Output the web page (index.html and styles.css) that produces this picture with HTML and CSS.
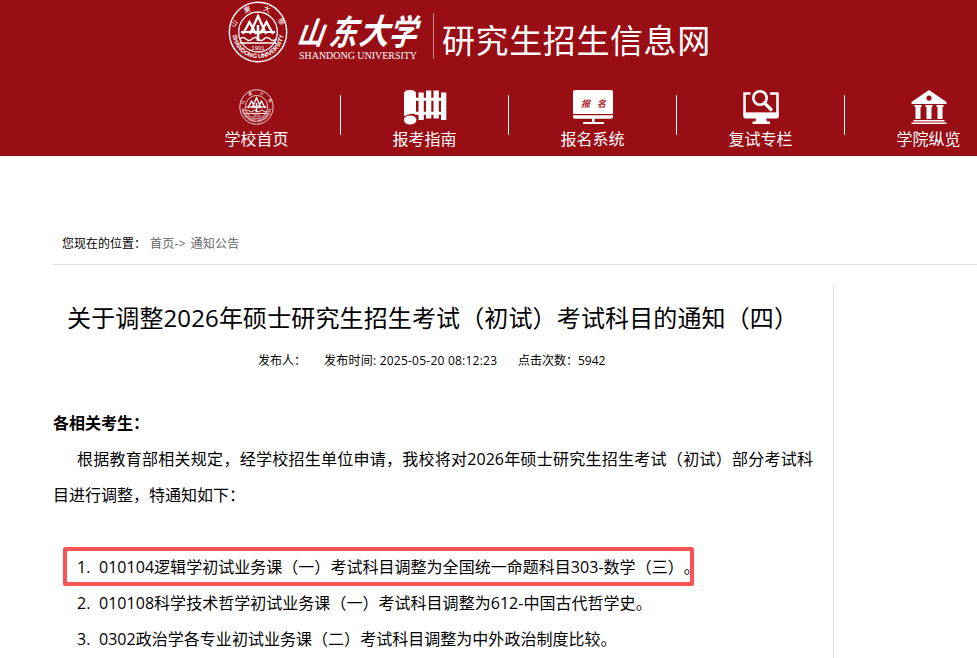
FILE: index.html
```
<!DOCTYPE html>
<html lang="zh-CN">
<head>
    <meta charset="UTF-8">
    <meta name="viewport" content="width=device-width, initial-scale=1.0">
    <title>山东大学研究生招生信息网</title>
    <link rel="stylesheet" href="styles.css">
</head>
<body>
    <!-- Shared emblem, used by the logo and the first menu item -->
    <svg class="defs" width="0" height="0">
        <symbol id="emblem" viewBox="0 0 60 62">
            <g fill="none" stroke="#fff">
                <ellipse cx="30" cy="31" rx="28.7" ry="29.7" stroke-width="1.4"/>
                <ellipse cx="30" cy="31" rx="19.3" ry="20" stroke-width="1.3"/>
                <path d="M15 33 L21.500 21 L28 33 M22 33 L30 15 L38 33 M32 33 L38.500 21 L45 33" stroke-width="2.300"/>
                <path d="M13 31 H47" stroke-width="2"/>
                <path d="M12 38 q3 -3 6 0 t6 0 t6 0 t6 0 t6 0 t6 0 M12 42 H48" stroke-width="1.6"/>
                <path d="M30 24 V40" stroke-width="2.600"/>
            </g>
            <path id="emblemArc" d="M4.500 34 A25.700 26.500 0 0 0 55.500 34" fill="none"/>
            <text class="emblem-en"><textPath href="#emblemArc" textLength="75" startOffset="0">SHANDONG UNIVERSITY</textPath></text>
            <text class="emblem-year" x="30" y="48.500">1901</text>
            <g class="emblem-cn">
                <text x="8" y="24" transform="rotate(-55 8 24)">山</text>
                <text x="20" y="11" transform="rotate(-20 20 11)">東</text>
                <text x="38" y="10.500" transform="rotate(20 38 10.500)">大</text>
                <text x="51" y="22" transform="rotate(55 51 22)">學</text>
            </g>
        </symbol>
    </svg>

    <div class="header">
        <div class="logo">
            <svg class="logo-emblem" width="60" height="62"><use href="#emblem"/></svg>
            <svg class="logo-name" width="136" height="62" viewBox="0 0 136 62">
                <g class="logo-cn">
                    <text transform="translate(6 43) skewX(-20) scale(.74 .84)">山</text>
                    <text transform="translate(38 43.500) skewX(-18) scale(.78 .96)">东</text>
                    <text transform="translate(68 43) skewX(-18) scale(.84 .96)">大</text>
                    <text transform="translate(98 43.500) skewX(-16) scale(.78 .98)">学</text>
                </g>
                <text class="logo-en" x="9" y="57.500" textLength="118" lengthAdjust="spacingAndGlyphs">SHANDONG UNIVERSITY</text>
            </svg>
            <div class="logo-line"></div>
            <div class="site-name">研究生招生信息网</div>
        </div>

        <ul class="nav">
            <li class="nav-item">
                <svg width="35" height="36" viewBox="0 0 60 62"><use href="#emblem"/></svg>
                <span>学校首页</span>
            </li>
            <li class="nav-item">
                <!-- bamboo scroll -->
                <svg width="44" height="36" viewBox="0 0 44 36" fill="#fff">
                    <path d="M1 4.500 Q1 1 7 1 Q13 1 13 4.500 V25.500 Q7 23.500 1 27.500 Z"/>
                    <ellipse cx="7.200" cy="31" rx="6.300" ry="4.600"/>
                    <path d="M15.500 3.500h5.300v27.500h-5.300zM23 1.500h5.300v28h-5.300zM30.500 1.500h5.300v28h-5.300zM38 3.500h5.300v27.500h-5.300z"/>
                    <path d="M12 8.700h31v3H12zM12 22.700h31v3H12z"/>
                </svg>
                <span>报考指南</span>
            </li>
            <li class="nav-item">
                <!-- monitor -->
                <svg width="42" height="36" viewBox="0 0 42 36" fill="#fff">
                    <path d="M3 1h36q2 0 2 2V25H1V3q0-2 2-2zM1 26.200h40v1.500q0 2-2 2H3q-2 0-2-2zM20 29.500h2.500v3.500H20zM11 33h21v2H11z"/>
                    <text class="monitor-text" x="9" y="18">报</text>
                    <text class="monitor-text" x="25" y="18">名</text>
                </svg>
                <span>报名系统</span>
            </li>
            <li class="nav-item">
                <!-- monitor with magnifier -->
                <svg width="38" height="36" viewBox="0 0 38 36">
                    <path d="M8.500 4.500H2.500V25H35.500V4.500H28" fill="none" stroke="#fff" stroke-width="2.500"/>
                    <path d="M1.300 23.500h35.500V27.500q0 2-2 2H3.300q-2 0-2-2zM14 29h10l1 3.500h3V35H10.500v-2.500h3z" fill="#fff"/>
                    <circle cx="18" cy="9" r="6.700" fill="none" stroke="#fff" stroke-width="2.600"/>
                    <path d="M22.500 14L29 20.500" stroke="#fff" stroke-width="3.200" stroke-linecap="round"/>
                </svg>
                <span>复试专栏</span>
            </li>
            <li class="nav-item">
                <!-- college building -->
                <svg width="36" height="36" viewBox="0 0 36 36" fill="#fff">
                    <path fill-rule="evenodd" d="M18 1L35.500 13V15H.5V13zM18 6.500a2.600 2.600 0 1 0 .01 0z"/>
                    <path d="M3.500 16h7v2h-1v12h-5v-12h-1zM14.500 16h7v2h-1v12h-5v-12h-1zM25.500 16h7v2h-1v12h-5v-12h-1z"/>
                    <path d="M2.500 31h31v1.500h-31zM.5 33.500h35v1.600H.5z"/>
                </svg>
                <span>学院纵览</span>
            </li>
        </ul>
    </div>

    <div class="breadcrumb">
        <span>您现在的位置：</span>
        <div class="crumbs"><a>首页</a>-&gt; <a>通知公告</a></div>
    </div>

    <div class="main">
        <div class="article">
            <h1>关于调整2026年硕士研究生招生考试（初试）考试科目的通知（四）</h1>
            <div class="meta">
                <span class="author">发布人：</span>
                <span class="date">发布时间: 2025-05-20 08:12:23</span>
                <span>点击次数：5942</span>
            </div>
            <div class="content">
                <p><strong>各相关考生：</strong></p>
                <p class="indent">根据教育部相关规定，经学校招生单位申请，我校将对2026年硕士研究生招生考试（初试）部分考试科目进行调整，特通知如下：</p>
                <ul class="subjects">
                    <li class="marked"><span class="num">1.</span>010104逻辑学初试业务课（一）考试科目调整为全国统一命题科目303-数学（三）。</li>
                    <li><span class="num">2.</span>010108科学技术哲学初试业务课（一）考试科目调整为612-中国古代哲学史。</li>
                    <li><span class="num">3.</span>0302政治学各专业初试业务课（二）考试科目调整为中外政治制度比较。</li>
                </ul>
            </div>
        </div>
    </div>
</body>
</html>
```

FILE: styles.css
```
* {
    box-sizing: border-box;
}
body {
    margin: 0;
    height: 658px;
    overflow: hidden;
    background-color: #fff;
    color: #000;
    font-family: "Open Sans", "Noto Sans CJK SC", sans-serif;
    font-size: 16px;
    text-spacing-trim: space-all;
    display: flex;
    flex-direction: column;
}
.defs {
    display: none;
}
.header {
    height: 156px;
    flex-shrink: 0;
    background-color: #990d15;
    color: #fff;
}
.logo {
    display: flex;
    padding: 1px 0 0 228px;
    height: 89px;
}
.emblem-en {
    font-family: "Liberation Sans", sans-serif;
    font-size: 6.2px;
    font-weight: bold;
    fill: #fff;
}
.emblem-year {
    font-family: "Liberation Sans", sans-serif;
    font-size: 6px;
    text-anchor: middle;
    fill: #fff;
}
.emblem-cn {
    font-family: "Noto Sans CJK SC", sans-serif;
    font-size: 7px;
    text-anchor: middle;
    fill: #fff;
}
.logo-name {
    margin-left: 2px;
}
.logo-cn {
    font-family: "Noto Sans CJK SC", sans-serif;
    font-size: 36px;
    font-weight: bold;
    fill: #fff;
}
.logo-en {
    font-family: "Liberation Serif", serif;
    font-size: 9.5px;
    fill: #fff;
}
.logo-line {
    width: 1px;
    height: 46px;
    margin: 12px 0 0 7px;
    background-color: #d08a8e;
}
.site-name {
    margin: 14px 0 0 8px;
    font-family: "Noto Sans CJK SC", sans-serif;
    font-size: 33px;
    line-height: 48px;
    letter-spacing: 0.6px;
    white-space: nowrap;
}
.nav {
    display: flex;
    list-style: none;
    margin: 0;
    padding: 0 0 0 173px;
}
.nav-item {
    width: 168px;
    flex-shrink: 0;
    display: flex;
    flex-direction: column;
    align-items: center;
    padding-right: 1px;
    background: linear-gradient(#fff, #fff) right 0 top 6px / 1px 40px no-repeat;
}
.nav-item span {
    margin-top: 2px;
    line-height: 24px;
}
.monitor-text {
    font-family: "Noto Sans CJK SC", sans-serif;
    font-size: 9px;
    font-weight: bold;
    font-style: italic;
    fill: #b3282d;
}
.breadcrumb {
    display: flex;
    flex-shrink: 0;
    height: 109px;
    margin-left: 53px;
    padding: 78px 0 0 9px;
    border-bottom: 1px solid #ddd;
    font-size: 12px;
    line-height: 20px;
}
.crumbs {
    margin-left: 4px;
    color: #666;
    letter-spacing: 0.3px;
    word-spacing: 1px;
}
.main {
    flex: 1;
    padding: 20px 0 0 53px;
}
.article {
    width: 781px;
    height: 100%;
    padding-right: 20px;
    border-right: 1px solid #ddd;
}
h1 {
    margin: 0;
    padding: 13px 0 1px 14px;
    font-size: 24px;
    font-weight: normal;
    line-height: 40px;
    letter-spacing: 0.13px;
    white-space: nowrap;
}
.meta {
    display: flex;
    padding: 12px 0 0 205px;
    font-size: 12px;
    line-height: 20px;
    white-space: nowrap;
}
.author {
    width: 66px;
}
.date {
    width: 194px;
    letter-spacing: 0.23px;
}
.content {
    padding-top: 34px;
    line-height: 36px;
}
.content p {
    margin: 0;
}
.indent {
    text-indent: 24px;
    text-align: justify;
}
.subjects {
    list-style: none;
    margin: 36px 0 0;
    padding: 0 0 0 24px;
    letter-spacing: 0.03px;
    white-space: nowrap;
}
.subjects li {
    display: flex;
}
.num {
    width: 22px;
}
.marked {
    position: relative;
}
/* highlight frame over the first subject */
.marked::after {
    content: "";
    position: absolute;
    box-sizing: border-box;
    left: -14px;
    top: -2px;
    width: 631px;
    height: 39px;
    border: 4px solid #ff5353;
    border-radius: 2px;
}
```
